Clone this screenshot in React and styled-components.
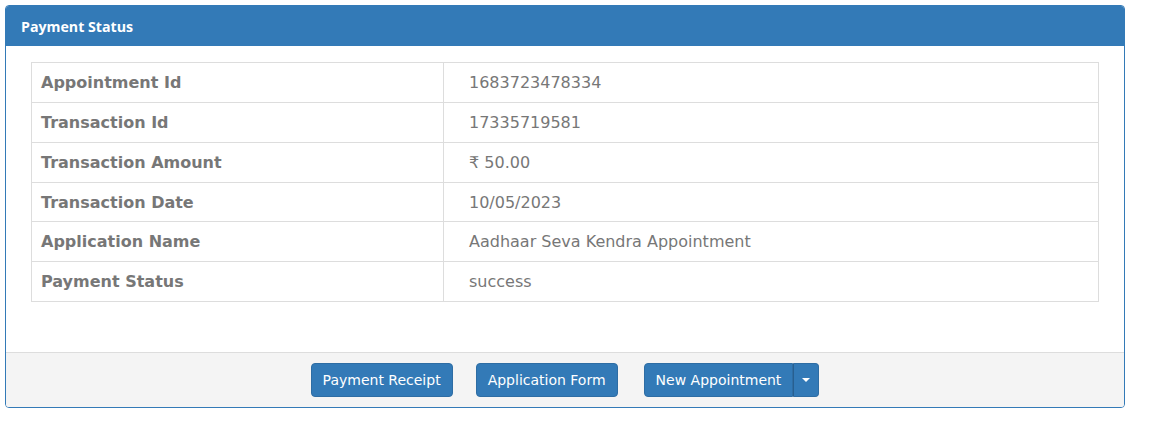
import React from "react";
import styled, { createGlobalStyle } from "styled-components";

const Global = createGlobalStyle`
  html, body { margin: 0; padding: 0; background: #fff; }
  body { font-family: "DejaVu Sans", Verdana, sans-serif; }
`;

const Page = styled.div`
  padding: 5px 25px 0 5px;
`;

const Panel = styled.div`
  border: 1px solid #337ab7;
  border-radius: 4px;
  background: #fff;
  overflow: hidden;
`;

const PanelHeading = styled.div`
  background: #337ab7;
  color: #fff;
  height: 40px;
  display: flex;
  align-items: center;
  padding: 0 15px;
`;

const PanelTitle = styled.h3`
  margin: 0;
  font-family: "Open Sans", sans-serif;
  font-weight: 700;
  font-size: 14.2px;
`;

const PanelBody = styled.div`
  padding: 16px 25px 50px 25px;
`;

const Table = styled.table`
  width: 100%;
  border-collapse: collapse;
  font-size: 16px;
  color: #777;
`;

const Label = styled.th`
  text-align: left;
  font-weight: bold;
  border: 1px solid #ddd;
  height: ${(p) => (p.$short ? 39 : 40)}px;
  padding: 0 9px;
  width: 412px;
  box-sizing: border-box;
`;

const Value = styled.td`
  border: 1px solid #ddd;
  padding: 0 25px;
`;

const PanelFooter = styled.div`
  background: #f4f4f4;
  border-top: 1px solid #ddd;
  height: 54px;
  display: flex;
  align-items: center;
  justify-content: center;
`;

const Button = styled.button`
  font-family: "DejaVu Sans", Verdana, sans-serif;
  font-size: 14px;
  color: #fff;
  background: #337ab7;
  border: 1px solid #2e6da4;
  border-radius: 4px;
  height: 34px;
  padding: 0 11px;
  margin-left: ${(p) => p.$gap || 0}px;
  cursor: pointer;
`;

const SplitGroup = styled.div`
  display: flex;
  margin-left: 26px;
`;

const SplitMain = styled(Button)`
  border-top-right-radius: 0;
  border-bottom-right-radius: 0;
`;

const SplitCaret = styled(Button)`
  border-top-left-radius: 0;
  border-bottom-left-radius: 0;
  border-left: 1px solid #285f8f;
  padding: 0 8px;
  display: flex;
  align-items: center;
`;

const Caret = styled.span`
  width: 0;
  height: 0;
  border-left: 4px solid transparent;
  border-right: 4px solid transparent;
  border-top: 4px solid #fff;
`;

const rows = [
  ["Appointment Id", "1683723478334"],
  ["Transaction Id", "17335719581"],
  ["Transaction Amount", "₹ 50.00"],
  ["Transaction Date", "10/05/2023", true],
  ["Application Name", "Aadhaar Seva Kendra Appointment"],
  ["Payment Status", "success"],
];

export default function App() {
  return (
    <>
      <Global />
      <Page>
        <Panel>
          <PanelHeading>
            <PanelTitle>Payment Status</PanelTitle>
          </PanelHeading>
          <PanelBody>
            <Table>
              <tbody>
                {rows.map(([k, v, s]) => (
                  <tr key={k}>
                    <Label $short={s}>{k}</Label>
                    <Value>{v}</Value>
                  </tr>
                ))}
              </tbody>
            </Table>
          </PanelBody>
          <PanelFooter>
            <Button>Payment Receipt</Button>
            <Button $gap={23}>Application Form</Button>
            <SplitGroup>
              <SplitMain>New Appointment</SplitMain>
              <SplitCaret>
                <Caret />
              </SplitCaret>
            </SplitGroup>
          </PanelFooter>
        </Panel>
      </Page>
    </>
  );
}
